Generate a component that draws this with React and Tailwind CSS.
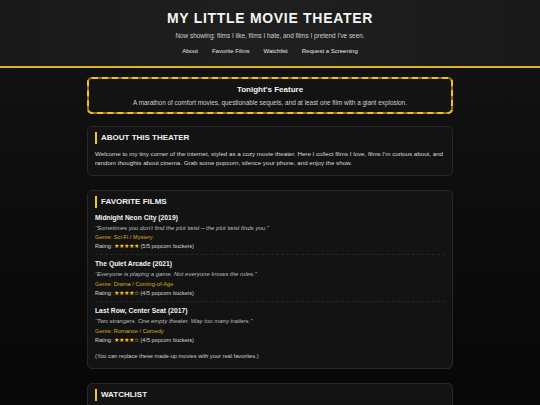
import React from 'react';

const films = [
  { title: "Midnight Neon City (2019)", quote: "\u201cSometimes you don\u2019t find the plot twist \u2013 the plot twist finds you.\u201d", genre: "Sci-Fi / Mystery", stars: "\u2605\u2605\u2605\u2605\u2605", score: "5/5" },
  { title: "The Quiet Arcade (2021)", quote: "\u201cEveryone is playing a game. Not everyone knows the rules.\u201d", genre: "Drama / Coming-of-Age", stars: "\u2605\u2605\u2605\u2605\u2606", score: "4/5" },
  { title: "Last Row, Center Seat (2017)", quote: "\u201cTwo strangers. One empty theater. Way too many trailers.\u201d", genre: "Romance / Comedy", stars: "\u2605\u2605\u2605\u2605\u2606", score: "4/5" },
];

function Heading({ children }) {
  return (
    <h2 className="border-l-2 border-[#f5c518] pl-[4px] text-[8px] leading-[12px] font-bold uppercase text-[#f2f2f2]">
      {children}
    </h2>
  );
}

export default function App() {
  return (
    <div
      className="min-h-screen bg-[linear-gradient(180deg,#141414_0%,#0c0c0c_50%,#060606_100%)] text-[#e8e8e8]"
      style={{ fontFamily: "'Liberation Sans', Arial, sans-serif" }}
    >
      {/* Header */}
      <header className="bg-[linear-gradient(90deg,#191919,#1f1f1f_50%,#191919)] border-b-2 border-[#e0b21c] pt-[10px] pb-[10px] text-center">
        <h1 className="text-[14px] leading-[16px] font-bold tracking-[0.05em] text-[#f4f4f4]">MY LITTLE MOVIE THEATER</h1>
        <p className="mt-[5px] text-[6.4px] leading-[9px] text-[#cfcfcf]">
          Now showing: films I like, films I hate, and films I pretend I've seen.
        </p>
        <nav className="mt-[7px] flex justify-center gap-[14px] text-[6px] leading-[9px] text-[#e6e6e6]">
          <span>About</span>
          <span>Favorite Films</span>
          <span>Watchlist</span>
          <span>Request a Screening</span>
        </nav>
      </header>

      <main className="mx-auto w-[366px] pt-[9px] pb-[20px]">
        {/* Tonight's feature */}
        <div className="rounded-[5px] bg-[#8c6e16]">
          <div className="rounded-[5px] border-2 border-dashed border-[#f2c21f] bg-[#131313] bg-clip-padding pt-[6px] pb-[5px] text-center">
            <h3 className="text-[8px] leading-[10px] font-bold text-[#f4f4f4]">Tonight's Feature</h3>
            <p className="mt-[4px] text-[6.4px] leading-[8px] text-[#cfcfcf]">
              A marathon of comfort movies, questionable sequels, and at least one film with a giant explosion.
            </p>
          </div>
        </div>

        {/* About */}
        <section className="mt-[12px] rounded-[5px] border border-[#282828] bg-[#131313] px-[7px] pt-[5px] pb-[7px]">
          <Heading>About This Theater</Heading>
          <p className="mt-[5px] text-[6.2px] leading-[9.3px] text-[#dcdcdc]">
            Welcome to my tiny corner of the internet, styled as a cozy movie theater. Here I collect films I love, films I'm curious about,
            and random thoughts about cinema. Grab some popcorn, silence your phone, and enjoy the show.
          </p>
        </section>

        {/* Favorite films */}
        <section className="mt-[14px] rounded-[5px] border border-[#282828] bg-[#131313] px-[7px] pt-[5px] pb-[6px]">
          <Heading>Favorite Films</Heading>
          <div className="mt-[5px]">
            {films.map((f, i) => (
              <div
                key={f.title}
                className={i < films.length - 1 ? "pb-[3px] mb-[4px] border-b border-dashed border-[#262626]" : ""}
              >
                <h4 className="text-[6.75px] leading-[10px] font-bold text-[#f4f4f4]">{f.title}</h4>
                <p className="mt-[1px] text-[6px] leading-[9.3px] italic text-[#bdbdbd]">{f.quote}</p>
                <p className="text-[5.65px] leading-[9.3px] text-[#d9aa22]">Genre: {f.genre}</p>
                <p className="text-[5.5px] leading-[9.3px] text-[#d8d8d8]">
                  Rating: <span className="text-[#f2c21f]">{f.stars}</span> ({f.score} popcorn buckets)
                </p>
              </div>
            ))}
          </div>
          <p className="mt-[7px] text-[5.7px] leading-[9.3px] text-[#cfcfcf]">
            (You can replace these made-up movies with your real favorites.)
          </p>
        </section>

        {/* Watchlist */}
        <section className="mt-[14px] rounded-[5px] border border-[#282828] bg-[#131313] px-[7px] pt-[5px] pb-[30px]">
          <Heading>Watchlist</Heading>
        </section>
      </main>
    </div>
  );
}
